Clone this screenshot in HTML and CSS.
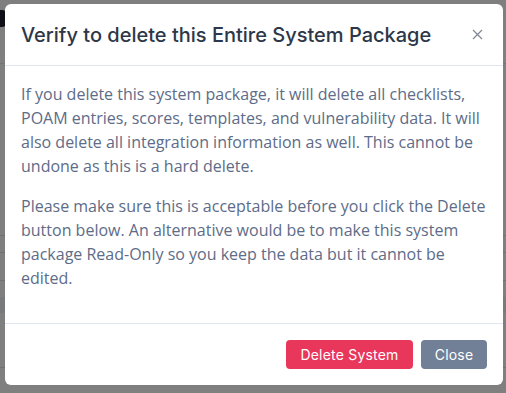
FILE: index.html
```html
<!DOCTYPE html>
<html lang="en">
<head>
<meta charset="utf-8">
<title>Verify delete</title>
<link rel="stylesheet" href="styles.css">
</head>
<body>
<div class="page">
  <div class="page-mark"></div>
  <div class="page-rule"></div>
  <div class="page-table">
    <div class="page-row r1"></div>
    <div class="page-row r2"></div>
    <div class="page-row r3"></div>
    <div class="page-band"></div>
    <div class="page-row r4"></div>
  </div>
</div>
<div class="backdrop"></div>
<div class="modal">
  <div class="modal-header">
    <h5 class="modal-title">Verify to delete this Entire System Package</h5>
    <button class="btn-close" type="button" aria-label="Close">
      <svg width="11" height="11" viewBox="0 0 11 11"><path d="M1 1L10 10M10 1L1 10" stroke="#7f8794" stroke-width="1.2" fill="none"/></svg>
    </button>
  </div>
  <div class="modal-body">
    <p>If you delete this system package, it will delete all checklists, POAM entries, scores, templates, and vulnerability data. It will also delete all integration information as well. This cannot be undone as this is a hard delete.</p>
    <p>Please make sure this is acceptable before you click the Delete button below. An alternative would be to make this system package Read-Only so you keep the data but it cannot be edited.</p>
  </div>
  <div class="modal-footer">
    <button class="btn btn-danger" type="button">Delete System</button>
    <button class="btn btn-secondary" type="button">Close</button>
  </div>
</div>
</body>
</html>
```
FILE: styles.css
```css
* { box-sizing: border-box; }
html, body { margin: 0; padding: 0; }
body {
  width: 506px;
  height: 393px;
  overflow: hidden;
  position: relative;
  background: #ffffff;
  font-family: "Open Sans", "Noto Sans", sans-serif;
}
.page {
  padding-top: 10px;
}
.page-mark {
  width: 6px;
  height: 17px;
  border-radius: 0 4px 4px 0;
  background: #1a202c;
}
.page-rule {
  margin-top: 36px;
  height: 1px;
  background: #e2e8f0;
}
.page-table {
  margin-top: 171px;
}
.page-row { height: 1px; background: #dde3ea; }
.page-row.r2 { margin-top: 16px; }
.page-row.r3 { margin-top: 27px; }
.page-band { margin-top: 16px; height: 16px; background: #f3f5f8; }
.page-row.r4 { margin-top: 54px; }
.backdrop {
  position: absolute;
  inset: 0;
  background: rgba(0, 0, 0, 0.5);
}
.modal {
  position: absolute;
  left: 5px;
  top: 4px;
  width: 498px;
  height: 381px;
  background: #fff;
  border-radius: 6px;
  display: flex;
  flex-direction: column;
}
.modal-header {
  display: flex;
  align-items: center;
  justify-content: space-between;
  padding: 16px;
  height: 62px;
  border-bottom: 1px solid #dfe6f0;
}
.modal-title {
  margin: 0;
  font-family: "Inter", sans-serif;
  font-weight: 500;
  font-size: 20px;
  line-height: 30px;
  color: #2d3748;
}
.btn-close {
  border: 0;
  background: transparent;
  padding: 0;
  margin-right: 4px;
  width: 11px;
  height: 11px;
  display: flex;
}
.modal-body {
  flex: 1;
  padding: 16px 16px 0 16px;
  color: #5d6c88;
  font-size: 16px;
  line-height: 24px;
}
.modal-body p { margin: 0 0 16px 0; }
.modal-footer {
  border-top: 1px solid #dfe6f0;
  padding: 16px;
  display: flex;
  justify-content: flex-end;
  gap: 8px;
}
.btn {
  font-family: "Inter", sans-serif;
  font-size: 14px;
  font-weight: 400;
  letter-spacing: 0.2px;
  height: 29px;
  padding: 0;
  border: 0;
  border-radius: 4px;
  color: #fff;
}
.btn-danger { background: #e9365b; width: 127px; }
.btn-secondary { background: #718096; width: 66px; }
```
